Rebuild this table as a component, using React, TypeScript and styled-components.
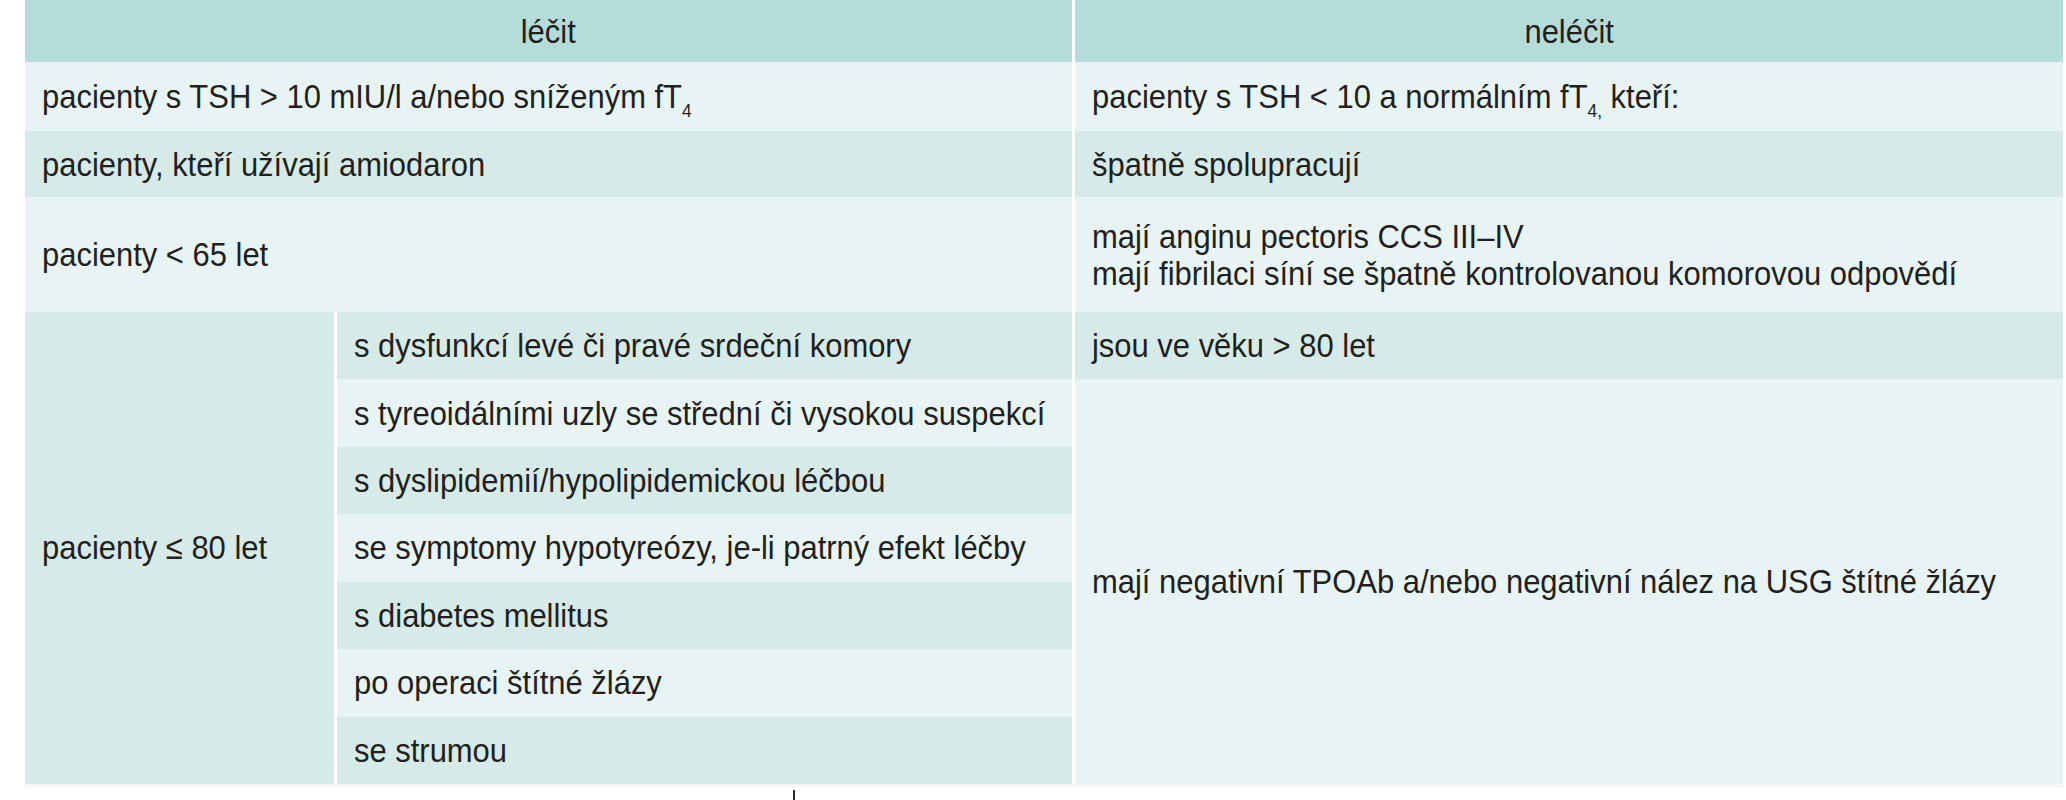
import React from 'react';
import styled, { createGlobalStyle } from 'styled-components';

type Tone = 'head' | 'light' | 'dark';

const GlobalStyle = createGlobalStyle`
  html, body {
    margin: 0;
    padding: 0;
    background: #ffffff;
  }
`;

const tones: Record<Tone, string> = {
  head: '#b4dcd9',
  light: '#e8f4f3',
  dark: '#d6eae8',
};

const Page = styled.div`
  width: 2066px;
  height: 800px;
  padding-left: 25px;
  box-sizing: border-box;
  font-family: 'Liberation Sans', Arial, sans-serif;
  font-size: 34px;
  color: #221f20;
`;

const Table = styled.div`
  display: grid;
  width: 2038px;
  grid-template-columns: 309px 735px 988px;
  grid-template-rows: 62px 69px 66px 115px repeat(7, 67.43px);
  column-gap: 3px;
  background: #ffffff;
  border-bottom: 3px solid #f1f8f7;
`;

const Cell = styled.div<{ $tone: Tone; $area: string; $center?: boolean }>`
  grid-area: ${(p) => p.$area};
  background: ${(p) => tones[p.$tone]};
  display: flex;
  flex-direction: column;
  justify-content: center;
  align-items: ${(p) => (p.$center ? 'center' : 'flex-start')};
  padding: 0 17px;
  line-height: 37px;
  white-space: nowrap;
`;

// the source face is a narrow humanist sans; squeeze the glyphs to its width
const Text = styled.span<{ $center?: boolean }>`
  display: inline-block;
  transform: scaleX(0.91);
  transform-origin: ${(p) => (p.$center ? 'center' : 'left')} center;
`;

const Sub = styled.sub`
  font-size: 19px;
  line-height: 0;
  vertical-align: -9px;
`;

const Footer = styled.div`
  display: flex;
  padding: 3px 0 0 768px;
`;

const Tick = styled.span`
  width: 2px;
  height: 10px;
  background: #2a2a2a;
`;

const subRows = [
  's dysfunkcí levé či pravé srdeční komory',
  's tyreoidálními uzly se střední či vysokou suspekcí',
  's dyslipidemií/hypolipidemickou léčbou',
  'se symptomy hypotyreózy, je-li patrný efekt léčby',
  's diabetes mellitus',
  'po operaci štítné žlázy',
  'se strumou',
];

const App = (): JSX.Element => {
  return (
    <Page>
      <GlobalStyle />
      <Table>
        <Cell $tone="head" $area="1 / 1 / 2 / 3" $center>
          <Text $center>léčit</Text>
        </Cell>
        <Cell $tone="head" $area="1 / 3 / 2 / 4" $center>
          <Text $center>neléčit</Text>
        </Cell>

        <Cell $tone="light" $area="2 / 1 / 3 / 3">
          <Text>
            pacienty s TSH &gt; 10 mIU/l a/nebo sníženým fT<Sub>4</Sub>
          </Text>
        </Cell>
        <Cell $tone="light" $area="2 / 3 / 3 / 4">
          <Text>
            pacienty s TSH &lt; 10 a normálním fT<Sub>4,</Sub> kteří:
          </Text>
        </Cell>

        <Cell $tone="dark" $area="3 / 1 / 4 / 3">
          <Text>pacienty, kteří užívají amiodaron</Text>
        </Cell>
        <Cell $tone="dark" $area="3 / 3 / 4 / 4">
          <Text>špatně spolupracují</Text>
        </Cell>

        <Cell $tone="light" $area="4 / 1 / 5 / 3">
          <Text>pacienty &lt; 65 let</Text>
        </Cell>
        <Cell $tone="light" $area="4 / 3 / 5 / 4">
          <Text>mají anginu pectoris CCS III–IV</Text>
          <Text>mají fibrilaci síní se špatně kontrolovanou komorovou odpovědí</Text>
        </Cell>

        <Cell $tone="dark" $area="5 / 1 / 12 / 2">
          <Text>pacienty ≤ 80 let</Text>
        </Cell>
        {subRows.map((text, i) => (
          <Cell
            key={text}
            $tone={i % 2 === 0 ? 'dark' : 'light'}
            $area={`${5 + i} / 2 / ${6 + i} / 3`}
          >
            <Text>{text}</Text>
          </Cell>
        ))}

        <Cell $tone="dark" $area="5 / 3 / 6 / 4">
          <Text>jsou ve věku &gt; 80 let</Text>
        </Cell>
        <Cell $tone="light" $area="6 / 3 / 12 / 4">
          <Text>mají negativní TPOAb a/nebo negativní nález na USG štítné žlázy</Text>
        </Cell>
      </Table>
      <Footer>
        <Tick />
      </Footer>
    </Page>
  );
};

export default App;
